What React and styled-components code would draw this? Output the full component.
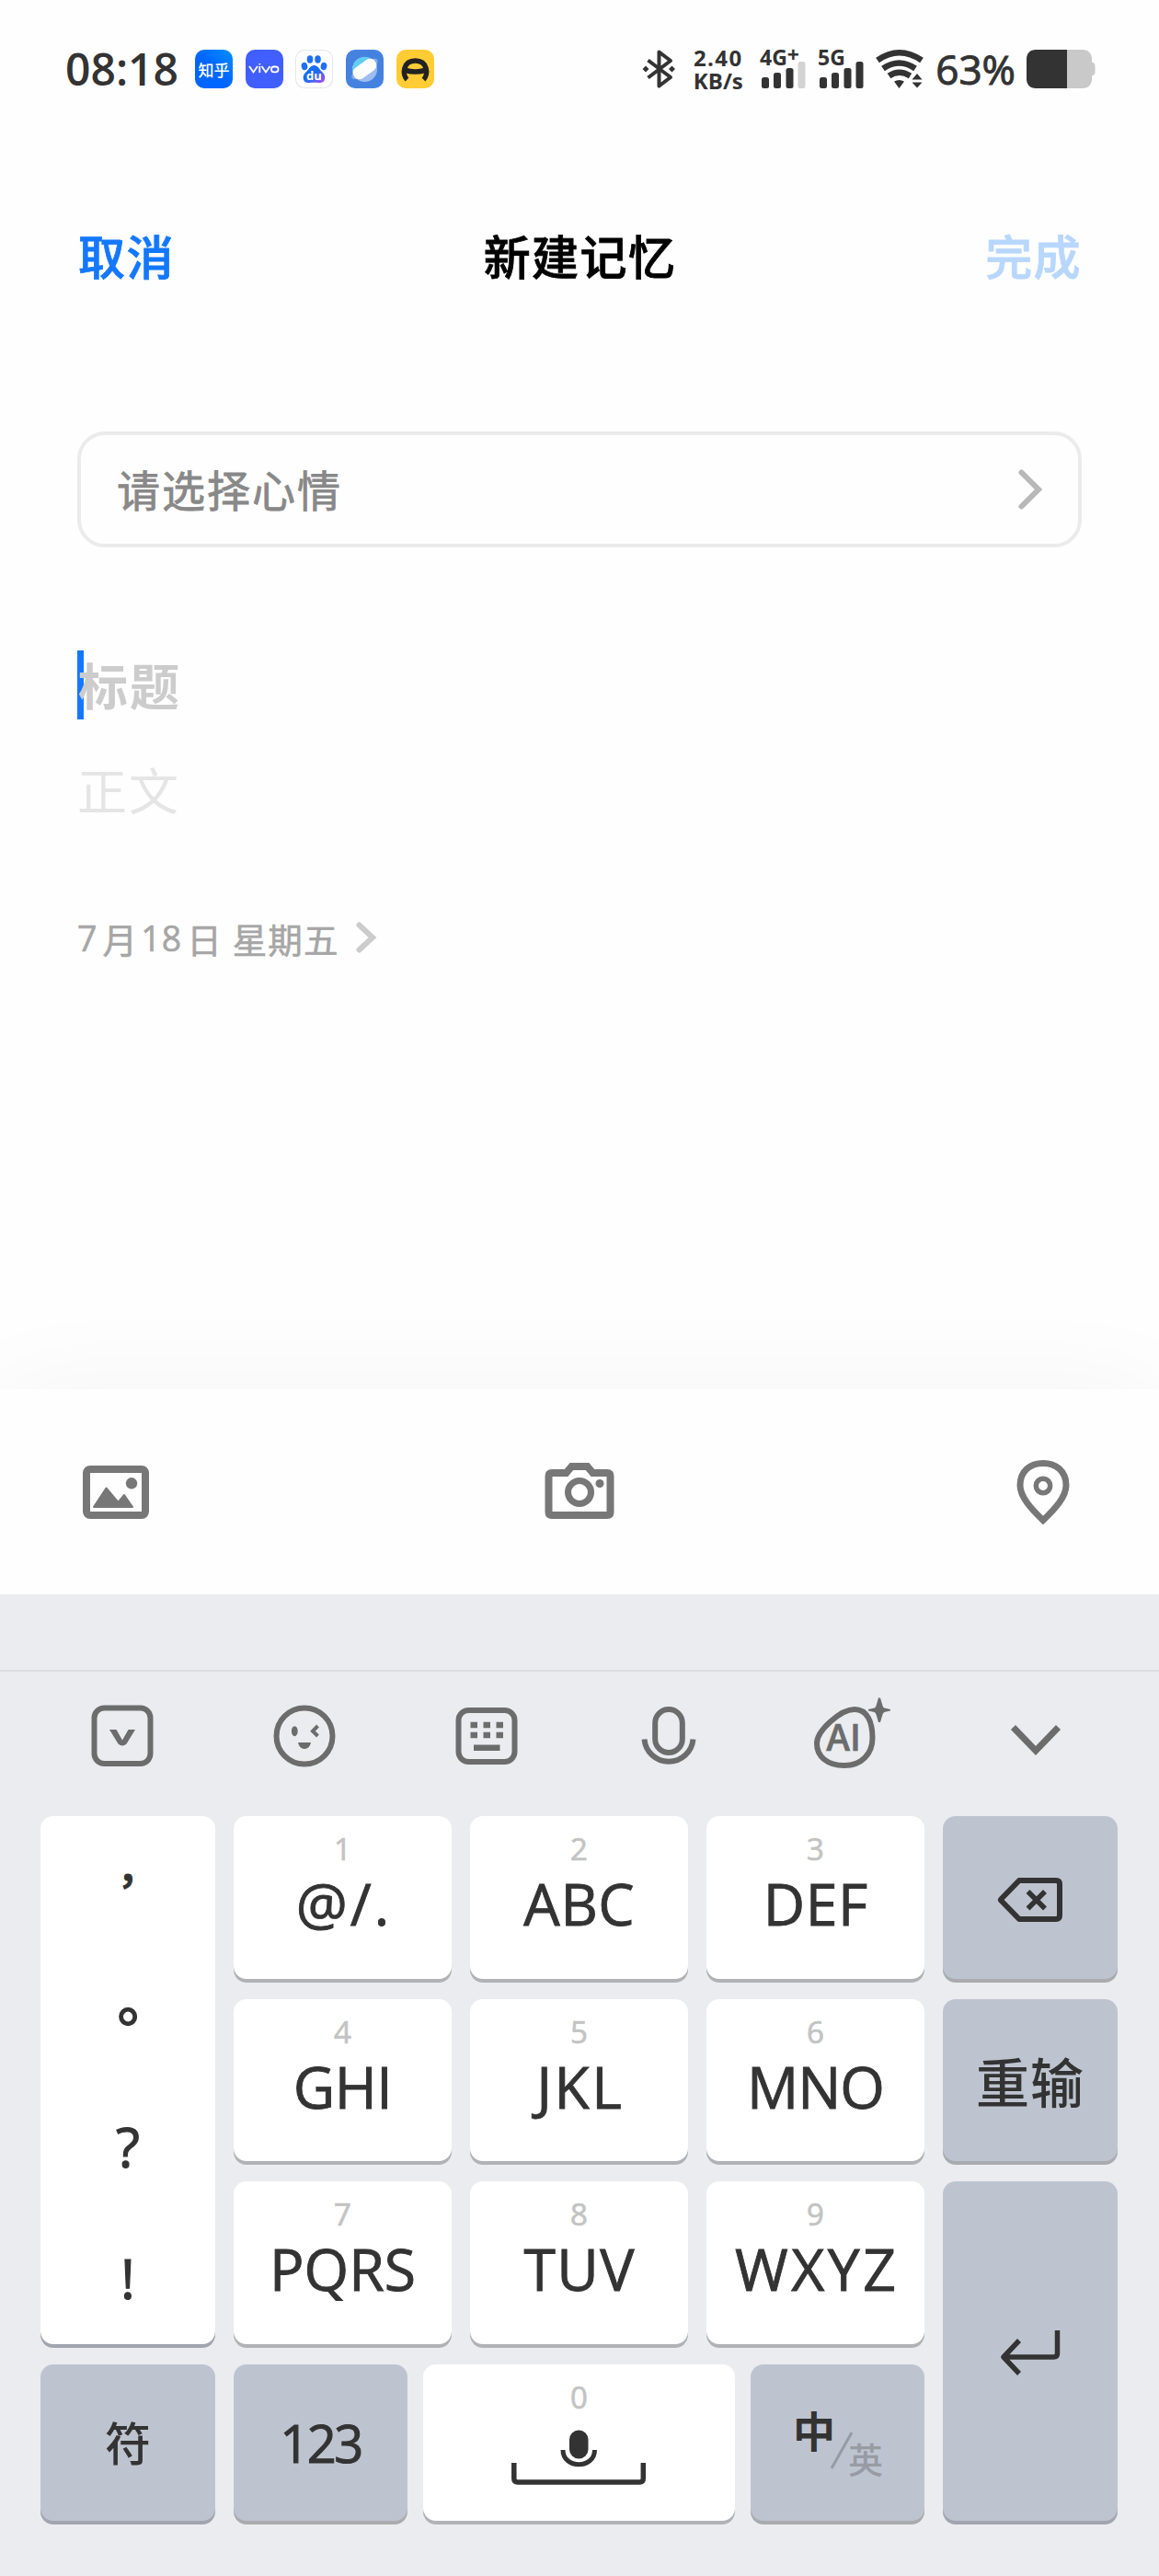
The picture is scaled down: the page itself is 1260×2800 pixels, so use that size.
import styled, { createGlobalStyle } from "styled-components";

const GlobalStyle = createGlobalStyle`
  * {
    box-sizing: border-box;
  }

  body {
    margin: 0;
    background: #fefefe;
    font-family: "Open Sans", "Noto Sans CJK SC", sans-serif;
  }
`;

const Screen = styled.div`
  width: 1260px;
  height: 2800px;
  display: flex;
  flex-direction: column;
  overflow: hidden;
  background: #fefefe;
`;

/* ---------- status bar ---------- */

const StatusBar = styled.div`
  height: 150px;
  padding: 0 69px 0 71px;
  display: flex;
  justify-content: space-between;
  align-items: center;
  color: #333;
`;

const StatusGroup = styled.div`
  display: flex;
  align-items: center;
`;

const Clock = styled.span`
  width: 141px;
  font-size: 48px;
  font-weight: 600;
  line-height: 60px;
`;

const AppIcons = styled.div`
  display: flex;
  gap: 13.7px;
`;

const AppIcon = styled.div`
  width: 41px;
  height: 42px;
  display: flex;
  align-items: center;
  justify-content: center;
  border-radius: 10px;
  overflow: hidden;
  background: ${({ $bg }) => $bg};
  box-shadow: ${({ $outlined }) => ($outlined ? "inset 0 0 0 1px #e6e6e6" : "none")};
  color: #fff;
  font-size: 17px;
  font-weight: 500;
  white-space: nowrap;
`;

const NetSpeed = styled.div`
  width: 91px;
  display: flex;
  flex-direction: column;
  align-items: center;
  font-size: 24px;
  font-weight: 700;
  line-height: 25px;
  white-space: nowrap;
`;

const Speed = styled.span`
  letter-spacing: 1.4px;
`;

const Percent = styled.span`
  margin: 0 12px 0 13px;
  font-size: 44px;
  font-weight: 500;
  line-height: 60px;
  -webkit-text-stroke: 1px #333;
`;

const SignalBox = styled.div`
  width: 63px;
  height: 42px;
`;

/* ---------- editor ---------- */

const Header = styled.header`
  height: 319px;
  padding: 0 84px 0 85px;
  display: grid;
  grid-template-columns: 1fr auto 1fr;
  align-items: start;
  font-size: 51px;
  line-height: 258px;
`;

const HeaderText = styled.div`
  color: ${({ $color }) => $color};
  text-align: ${({ $align }) => $align};
  font-weight: 500;
  letter-spacing: 1.4px;
  -webkit-text-stroke: 0.8px ${({ $color }) => $color};
`;

const Editor = styled.main`
  flex: none;
  height: 1041px;
  padding: 0 84px;
  display: flex;
  flex-direction: column;
`;

const MoodPicker = styled.div`
  height: 126px;
  padding: 0 39px 0 39px;
  display: flex;
  align-items: center;
  justify-content: space-between;
  border: 4px solid #ebebeb;
  border-radius: 30px;
  color: #888;
  font-size: 47px;
  letter-spacing: 2px;
`;

const MoodText = styled.span`
  padding-bottom: 3px;
  -webkit-text-stroke: 0.8px #888;
`;

const TitleInput = styled.div`
  height: 75px;
  margin-top: 112px;
  border-left: 7px solid #1478ff;
  color: #ccc;
  font-size: 54px;
  font-weight: 700;
  line-height: 79px;
  letter-spacing: 2px;
  text-indent: -6px;
`;

const BodyInput = styled.div`
  height: 80px;
  margin-top: 38px;
  color: #e5e5e5;
  font-size: 54px;
  line-height: 80px;
  letter-spacing: 2px;
`;

const DateRow = styled.div`
  height: 60px;
  margin-top: 89px;
  display: flex;
  align-items: center;
  color: #a6a6a6;
  font-size: 37.5px;
  letter-spacing: 1.1px;
  white-space: pre;
  -webkit-text-stroke: 0.6px #a6a6a6;
`;

const DateDigits = styled.span`
  margin-left: ${({ $before = 0 }) => $before}px;
  margin-right: 5px;
`;

const DateChevron = styled.span`
  display: flex;
  margin-left: 18px;
`;

const AttachBar = styled.div`
  height: 223px;
  padding: 74px 90px 0;
  display: flex;
  justify-content: space-between;
  background: #fefefe;
  box-shadow: 0 0 115px rgba(0, 0, 0, 0.042);
`;

/* ---------- keyboard ---------- */

const Keyboard = styled.section`
  flex: 1;
  padding-top: 82px;
  background: #ebecf0;
`;

const ToolRow = styled.div`
  height: 159px;
  padding: 22px 38px 0 34px;
  display: grid;
  grid-template-columns: repeat(6, 198px);
  border-top: 2px solid #dcdde1;
`;

const Tool = styled.div`
  display: flex;
  justify-content: center;
`;

const Keys = styled.div`
  padding: 0 45px 0 44px;
  display: grid;
  grid-template-columns: 190px 237px 237px 237px 190px;
  grid-template-rows: 177px 176px 177px 170px;
  gap: 22px 20px;
`;

const Key = styled.div`
  grid-row: span ${({ $rows = 1 }) => $rows};
  display: flex;
  flex-direction: column;
  align-items: center;
  justify-content: ${({ $fn }) => ($fn ? "center" : "flex-start")};
  border-radius: 14px;
  background: ${({ $fn }) => ($fn ? "#bec4cf" : "#fff")};
  box-shadow: 0 4px 0 ${({ $edge }) => $edge || "#b1b2b6"};
  color: #333;
  font-size: ${({ $size = 56 }) => $size}px;
  font-weight: 500;
`;

const KeyLabel = styled.span`
  padding-bottom: ${({ $lift = 0 }) => $lift}px;
  letter-spacing: ${({ $spacing = 0 }) => $spacing}px;
  -webkit-text-stroke: ${({ $stroke = 0 }) => $stroke}px #333;
`;

const Digit = styled.span`
  height: 34px;
  margin-top: 19px;
  color: #c3c3c3;
  font-size: 33px;
  font-weight: 400;
  line-height: 34px;
  -webkit-text-stroke: 0.7px #c3c3c3;
`;

const Letters = styled.span`
  height: 80px;
  margin-top: 2px;
  margin-right: -${({ $spacing }) => Math.max($spacing, 0)}px;
  font-size: 62.5px;
  font-weight: 500;
  line-height: 80px;
  letter-spacing: ${({ $spacing }) => $spacing}px;
  -webkit-text-stroke: 0.9px #333;
`;

const Punctuation = styled.span`
  height: 25%;
  display: flex;
  align-items: center;
  padding-bottom: ${({ $lift = 0 }) => $lift}px;
  font-family: ${({ $cjk }) => ($cjk ? '"Noto Sans CJK TC"' : '"Open Sans"')}, sans-serif;
  font-size: ${({ $size = 60 }) => $size}px;
  line-height: 60px;
  -webkit-text-stroke: 1.2px #333;
`;

const BottomRow = styled.div`
  grid-column: 2 / span 3;
  display: grid;
  grid-template-columns: 189px 339px 189px;
  gap: 17px;
`;

const SpaceGlyph = styled.div`
  display: flex;
  margin-top: 18px;
  padding-right: 2px;
`;

const LangSwitch = styled.div`
  width: 98px;
  height: 80px;
  margin: 0 0 2px 1px;
  display: flex;
  justify-content: space-between;
`;

const LangOption = styled.span`
  align-self: ${({ $active }) => ($active ? "flex-start" : "flex-end")};
  color: ${({ $active }) => ($active ? "#333" : "#979ba4")};
  font-size: ${({ $active }) => ($active ? 46 : 38)}px;
  font-weight: ${({ $active }) => ($active ? 700 : 500)};
  line-height: ${({ $active }) => ($active ? 56 : 41)}px;
`;

/* ---------- icons ---------- */

const Drawing = styled.svg`
  flex: none;
  overflow: visible;
`;

const Svg = ({ w, h, children, ...rest }) => (
  <Drawing width={w} height={h} viewBox={`0 0 ${w} ${h}`} fill="none" {...rest}>
    {children}
  </Drawing>
);

const VivoMark = () => (
  <Svg w={34} h={12} stroke="#fff" strokeWidth="1.8">
    <path d="M1 3l4.500 6.500L10 3M12.300 3v7M14.500 3L19 9.500 23.500 3M12.300 0v1.500" />
    <rect x="25" y="3.500" width="7.500" height="5.800" rx="2.700" />
  </Svg>
);

const BaiduMark = () => (
  <Svg w={41} h={42}>
    <defs>
      <linearGradient id="paw" x1="0" y1="0" x2="1" y2="1">
        <stop offset="0.500" stopColor="#1a6cf5" />
        <stop offset="1" stopColor="#b44df0" />
      </linearGradient>
    </defs>
    <g fill="#1f6ff2">
      <ellipse cx="10" cy="18" rx="3.300" ry="4.200" transform="rotate(-12 10 18)" />
      <ellipse cx="16" cy="10.500" rx="3.300" ry="4.200" />
      <ellipse cx="24.500" cy="10.500" rx="3.300" ry="4.200" />
      <ellipse cx="31" cy="18" rx="3.300" ry="4.200" transform="rotate(12 31 18)" />
    </g>
    <path
      d="M20.500 17c4 0 5.500 4 8 6.500 3 3 4.500 5 3.500 9-1 3-3.500 3.800-6.500 3.500-3-.4-7-.4-10 0-3 .3-5.500-.5-6.500-3.500-1-4 .5-6 3.500-9 2.500-2.500 4-6.500 8-6.500z"
      fill="url(#paw)"
    />
    <text x="20.500" y="33" textAnchor="middle" fontSize="13" fontWeight="700" fill="#fff">
      du
    </text>
  </Svg>
);

const BrowserMark = () => (
  <Svg w={41} h={42}>
    <circle cx="20.500" cy="21.500" r="13.500" fill="#9dbdf0" />
    <path d="M7 21.500a13.500 13.500 0 0 1 20-12L8 26z" fill="#62cdf0" />
    <ellipse cx="20.500" cy="21" rx="17" ry="6" transform="rotate(-36 20.500 21)" fill="#86aeea" />
    <rect x="6.500" y="14" width="28" height="14" rx="6.500" transform="rotate(-36 20.500 21)" fill="#fff" />
  </Svg>
);

const HelmetMark = () => (
  <Svg w={41} h={42} stroke="#222" strokeWidth="5.500">
    <path d="M11.500 32.500C6 27 7 12 20.500 12s14.500 15 9 20.500" />
    <path d="M10 22.500q10.500 3 21 0" />
  </Svg>
);

const Bluetooth = () => (
  <Svg w={37} h={42} stroke="#333" strokeWidth="4">
    <path d="M6.500 11.500L31 30 18.500 39.500V2.500L31 12 6.500 30.500" strokeLinejoin="round" />
    <path d="M4 17.500l3.500 3.500L4 24.500.500 21zM32.500 17.500L36 21l-3.500 3.500L29 21z" fill="#333" stroke="none" />
  </Svg>
);

const Signal = ({ label, plus, weak }) => (
  <SignalBox>
    <Svg w={63} h={42} fill="#333">
      <text x="0" y="17" fontSize="23" fontWeight="700">
        {label}
        {plus && <tspan dy="-3">+</tspan>}
      </text>
      <rect x="2" y="30" width="8" height="12" rx="2.500" />
      <rect x="15" y="25" width="8" height="17" rx="2.500" />
      <rect x="28.500" y="20" width="8" height="22" rx="2.500" />
      <rect x="41.500" y="13" width="8" height="29" rx="2.500" fill={weak ? "#d3d3d3" : "#333"} />
    </Svg>
  </SignalBox>
);

const Wifi = () => (
  <Svg w={52} h={42} stroke="#333" strokeWidth="6.500">
    <path d="M2 11.500Q25.500-5 50 11.500M8 20.500q17.500-12 35 0M14.500 28.500q11-7.500 23 0" />
    <path d="M20 34.500q5.500-3 11 0L25.500 42zM45 26l5.500 6.500h-11zM45 41.500l5.500-6h-11z" fill="#333" stroke="none" />
  </Svg>
);

const Battery = () => (
  <Svg w={75} h={42}>
    <path d="M44 0h17c6 0 10 4 10 10v3.500q3.500 1 3.500 4v7q0 3-3.500 4V32c0 6-4 10-10 10H44z" fill="#c9c9c9" />
    <path d="M44 0v42H10C4 42 0 38 0 32V10C0 4 4 0 10 0z" fill="#333" />
  </Svg>
);

const ChevronRight = ({ w, h, color }) => (
  <Svg w={w} h={h} stroke={color} strokeWidth="6" strokeLinecap="round">
    <path d={`M3.500 3.500L${w - 4} ${h / 2} 3.500 ${h - 3.500}`} />
  </Svg>
);

const Picture = () => (
  <Svg w={72} h={76}>
    <rect x="4" y="13" width="64" height="50" rx="4" stroke="#777" strokeWidth="8" />
    <circle cx="53" cy="28.300" r="6.200" fill="#777" />
    <path d="M12 54l13.500-20.500 13 15.500 6.500-8 9 13z" fill="#777" stroke="#777" strokeWidth="2" strokeLinejoin="round" />
  </Svg>
);

const Camera = () => (
  <Svg w={76} h={76} stroke="#777" strokeWidth="8">
    <path d="M8 17h15.500l6-7h17l6 7H68q3.500 0 3.500 3.500V59.500q0 3.500-3.500 3.500H8q-3.500 0-3.500-3.500V20.500Q4.500 17 8 17z" />
    <circle cx="38" cy="38" r="12.500" strokeWidth="7" />
    <circle cx="60" cy="28.500" r="4.500" fill="#777" stroke="none" />
  </Svg>
);

const Pin = () => (
  <Svg w={72} h={76} stroke="#777" strokeWidth="7">
    <path d="M36 68.500C23 56 11 43 11 30.500 11 15 22 6.500 36 6.500s25 8.500 25 24C61 43 49 56 36 68.500z" />
    <circle cx="36" cy="31" r="7.700" strokeWidth="5.500" />
  </Svg>
);

const tool = { w: 80, h: 84, stroke: "#6c6c6c", strokeWidth: 6 };

const PhraseIcon = () => (
  <Svg {...tool}>
    <rect x="9.500" y="17.500" width="61" height="60.500" rx="11" />
    <path d="M26 41h7.500l6.500 11.500L46.500 41H54l-9.500 15.500q-4.500 4-9 0z" fill="#6c6c6c" stroke="none" />
  </Svg>
);

const FaceIcon = () => (
  <Svg {...tool}>
    <circle cx="40" cy="48" r="30.500" />
    <ellipse cx="29.300" cy="42.700" rx="3.400" ry="5.500" fill="#6c6c6c" stroke="none" />
    <path d="M54.500 37l-5.500 5.700 5.500 5.300" strokeWidth="4" />
    <path d="M33 55h14q-1.500 7-7 7t-7-7z" fill="#6c6c6c" stroke="none" />
  </Svg>
);

const KeypadIcon = () => (
  <Svg {...tool}>
    <rect x="9.500" y="20" width="61" height="56" rx="11" />
    <path d="M22.500 36h7.500M36.500 36H44M50.500 36H58M22.500 47h7.500M36.500 47H44M50.500 47H58M26 60.700h28.500" strokeWidth="6.500" />
  </Svg>
);

const MicIcon = () => (
  <Svg {...tool}>
    <rect x="25.200" y="19" width="29.600" height="47" rx="14.800" />
    <path d="M13.500 51.500a26.600 26.600 0 0 0 53 0" />
  </Svg>
);

const AiIcon = () => (
  <Svg {...tool}>
    <path d="M3 56C3 42 29 19 44 19c14 0 19.500 14 19.500 31S52 80 33 80 3 70 3 56z" />
    <path
      d="M70 6.500h2l2.500 8.500q.5 2 2 2.500l6.500 1.500v1.500l-6.500 1.500q-1.500.5-2 2.500L72 33h-2l-2.500-8.500q-.5-2-2-2.500l-6.500-1.500v-1.500l6.500-1.500q1.500-.5 2-2.500z"
      fill="#6c6c6c"
      stroke="none"
    />
    <text x="32" y="63.500" textAnchor="middle" fontSize="39" fontWeight="600" fill="#6c6c6c" stroke="#6c6c6c" strokeWidth="0.600">
      AI
    </text>
  </Svg>
);

const HideIcon = () => (
  <Svg {...tool} strokeWidth="7">
    <path d="M18.500 38.500L43 64l24.500-25.500" />
  </Svg>
);

const Backspace = () => (
  <Svg w={72} h={48} stroke="#333" strokeWidth="6">
    <path d="M24 5h40q4 0 4 4v34q0 4-4 4H24L4.500 27q-1-1 0-2z" strokeLinejoin="round" />
    <path d="M33.500 17L52 35.500M52 17L33.500 35.500" strokeWidth="5.500" />
  </Svg>
);

const Enter = () => (
  <Svg w={66} h={46} stroke="#333" strokeWidth="5.500">
    <path d="M62.500 0v25q0 4-4 4H4M21 11L4 29l17 18" strokeLinejoin="round" />
  </Svg>
);

const SpaceBar = () => (
  <Svg w={146} h={62} stroke="#333" strokeWidth="5.500">
    <rect x="63" y="0.500" width="20.500" height="31" rx="10.200" fill="#333" stroke="none" />
    <path d="M56 22c0 21 34.500 21 34.500 0" strokeWidth="5" />
    <path d="M2.800 36v17q0 4 4 4h132.500q4 0 4-4V36" />
  </Svg>
);

const SlashBox = styled.div`
  display: flex;
  margin: 0 -7px 0 -6px;
`;

const Slash = () => (
  <SlashBox>
    <Svg w={26} h={80} stroke="#979ba4" strokeWidth="3">
      <path d="M24 30L2 69" />
    </Svg>
  </SlashBox>
);

const LetterKey = ({ digit, spacing = 0, children }) => (
  <Key>
    <Digit>{digit}</Digit>
    <Letters $spacing={spacing}>{children}</Letters>
  </Key>
);

const App = () => (
  <>
    <GlobalStyle />
    <Screen>
      <StatusBar>
        <StatusGroup>
          <Clock>08:18</Clock>
          <AppIcons>
            <AppIcon $bg="linear-gradient(45deg, #0066ff 50%, #0090ff)">知乎</AppIcon>
            <AppIcon $bg="#415fff">
              <VivoMark />
            </AppIcon>
            <AppIcon $bg="#fff" $outlined>
              <BaiduMark />
            </AppIcon>
            <AppIcon $bg="#4582e0">
              <BrowserMark />
            </AppIcon>
            <AppIcon $bg="#ffcc33">
              <HelmetMark />
            </AppIcon>
          </AppIcons>
        </StatusGroup>
        <StatusGroup>
          <Bluetooth />
          <NetSpeed>
            <Speed>2.40</Speed>
            <span>KB/s</span>
          </NetSpeed>
          <Signal label="4G" plus weak />
          <Signal label="5G" />
          <Wifi />
          <Percent>63%</Percent>
          <Battery />
        </StatusGroup>
      </StatusBar>

      <Header>
        <HeaderText $color="#1478ff" $align="left">取消</HeaderText>
        <HeaderText $color="#000" $align="center">新建记忆</HeaderText>
        <HeaderText $color="#b8d7ff" $align="right">完成</HeaderText>
      </Header>

      <Editor>
        <MoodPicker>
          <MoodText>请选择心情</MoodText>
          <ChevronRight w={26} h={44} color="#b8b8b8" />
        </MoodPicker>
        <TitleInput>标题</TitleInput>
        <BodyInput>正文</BodyInput>
        <DateRow>
          <DateDigits>7</DateDigits>月
          <DateDigits $before={3}>18</DateDigits>日 星期五
          <DateChevron>
            <ChevronRight w={22} h={34} color="#ccc" />
          </DateChevron>
        </DateRow>
      </Editor>

      <AttachBar>
        <Picture />
        <Camera />
        <Pin />
      </AttachBar>

      <Keyboard>
        <ToolRow>
          <Tool><PhraseIcon /></Tool>
          <Tool><FaceIcon /></Tool>
          <Tool><KeypadIcon /></Tool>
          <Tool><MicIcon /></Tool>
          <Tool><AiIcon /></Tool>
          <Tool><HideIcon /></Tool>
        </ToolRow>
        <Keys>
          <Key $rows={3} $edge="#a2a4ae">
            <Punctuation $cjk $size={44} $lift={7}>，</Punctuation>
            <Punctuation $cjk $lift={1}>。</Punctuation>
            <Punctuation>?</Punctuation>
            <Punctuation>!</Punctuation>
          </Key>
          <LetterKey digit="1" spacing={3}>@/.</LetterKey>
          <LetterKey digit="2" spacing={0.5}>ABC</LetterKey>
          <LetterKey digit="3" spacing={0.5}>DEF</LetterKey>
          <Key $fn $edge="#a9abae">
            <Backspace />
          </Key>
          <LetterKey digit="4" spacing={-0.5}>GHI</LetterKey>
          <LetterKey digit="5" spacing={2.5}>JKL</LetterKey>
          <LetterKey digit="6" spacing={-1}>MNO</LetterKey>
          <Key $fn $edge="#a9abae" $size={58}>
            <KeyLabel $spacing={1}>重输</KeyLabel>
          </Key>
          <LetterKey digit="7">PQRS</LetterKey>
          <LetterKey digit="8" spacing={1.5}>TUV</LetterKey>
          <LetterKey digit="9" spacing={3.5}>WXYZ</LetterKey>
          <Key $fn $rows={2} $edge="#a2a4ae">
            <Enter />
          </Key>
          <Key $fn $edge="#a2a4ae" $size={50}>
            <KeyLabel $lift={3}>符</KeyLabel>
          </Key>
          <BottomRow>
            <Key $fn $edge="#a9abae">
              <KeyLabel $spacing={-2.5} $stroke={1.1}>123</KeyLabel>
            </Key>
            <Key>
              <Digit>0</Digit>
              <SpaceGlyph>
                <SpaceBar />
              </SpaceGlyph>
            </Key>
            <Key $fn $edge="#a9abae">
              <LangSwitch>
                <LangOption $active>中</LangOption>
                <Slash />
                <LangOption>英</LangOption>
              </LangSwitch>
            </Key>
          </BottomRow>
        </Keys>
      </Keyboard>
    </Screen>
  </>
);

export default App;
